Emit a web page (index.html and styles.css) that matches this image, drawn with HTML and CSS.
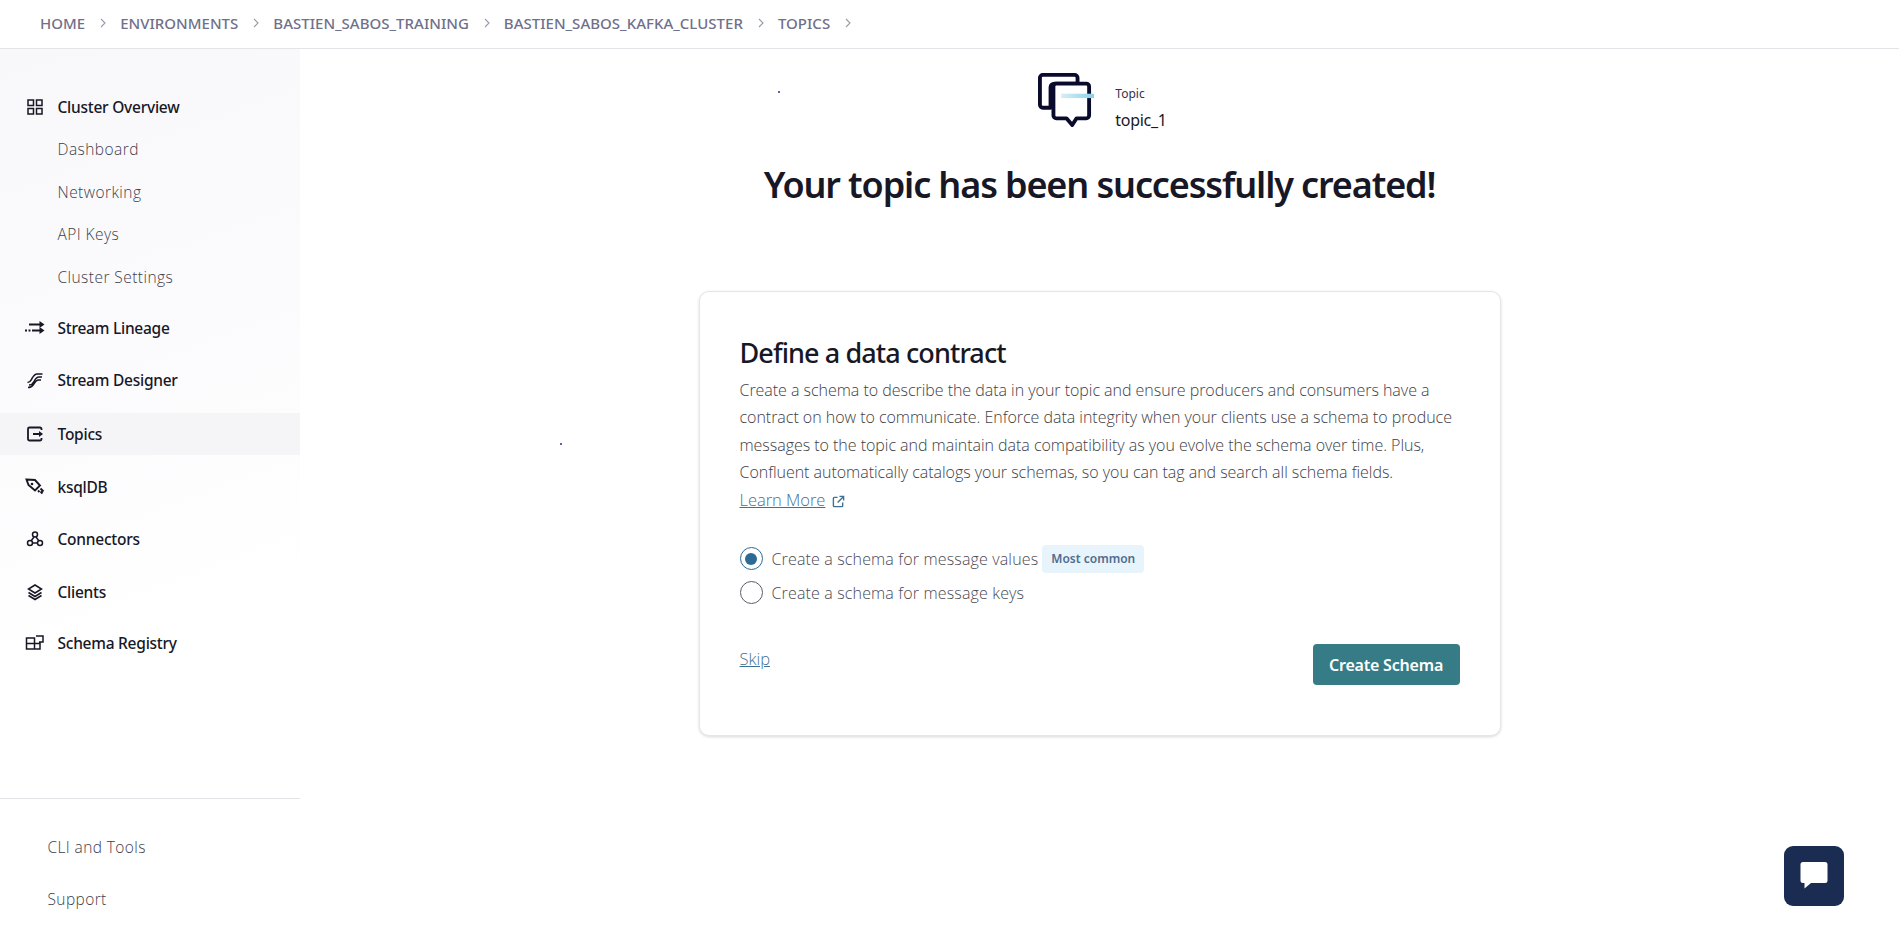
FILE: index.html
```html
<!DOCTYPE html>
<html lang="en">
<head>
<meta charset="utf-8">
<title>Topic created</title>
<link rel="stylesheet" href="styles.css">
</head>
<body>
<header class="topbar">
  <nav class="crumbs">
    <a>HOME</a><svg class="chev" viewBox="0 0 8 12"><path d="M2 2l4 4-4 4"/></svg>
    <a>ENVIRONMENTS</a><svg class="chev" viewBox="0 0 8 12"><path d="M2 2l4 4-4 4"/></svg>
    <a>BASTIEN_SABOS_TRAINING</a><svg class="chev" viewBox="0 0 8 12"><path d="M2 2l4 4-4 4"/></svg>
    <a>BASTIEN_SABOS_KAFKA_CLUSTER</a><svg class="chev" viewBox="0 0 8 12"><path d="M2 2l4 4-4 4"/></svg>
    <a>TOPICS</a><svg class="chev" viewBox="0 0 8 12"><path d="M2 2l4 4-4 4"/></svg>
  </nav>
</header>
<div class="shell">
  <aside class="sidebar">
    <div class="nav">
      <div class="item first"><svg class="ico" viewBox="0 0 18 18"><path d="M2 2h5.500v5.500H2zM10.500 2H16v5.500h-5.500zM2 10.500h5.500V16H2zM10.500 10.500H16V16h-5.500z"/></svg><span>Cluster Overview</span></div>
      <div class="sub">Dashboard</div>
      <div class="sub">Networking</div>
      <div class="sub">API Keys</div>
      <div class="sub">Cluster Settings</div>
      <div class="item"><svg class="ico wide" viewBox="0 0 20 18"><path d="M4 5.500h12M0 11.500h2M3.500 11.500h2M7 11.500h9" stroke-width="2"/><path class="fill" d="M14.500 2l5 3.500-5 3.500zM14.500 8l5 3.500-5 3.500z"/></svg><span>Stream Lineage</span></div>
      <div class="item designer"><svg class="ico" viewBox="0 0 18 18"><path d="M1.500 11.500c3 0 3-1.500 4.500-4S8.500 3 11 3h5.500M3 14c3 0 4-1.500 5-3.500s2.500-4.500 5-4.500h3M2 16.500c3 0 4.500-1.500 5.500-3S10 9 12.500 9H15"/></svg><span>Stream Designer</span></div>
      <div class="item active"><svg class="ico" viewBox="0 0 18 18"><path d="M15.500 5V4a1.500 1.500 0 0 0-1.500-1.500H3.500A1.500 1.500 0 0 0 2 4v10a1.500 1.500 0 0 0 1.500 1.500H14a1.500 1.500 0 0 0 1.500-1.500v-1M7 9h8.500" stroke-width="1.800"/><path class="fill" d="M13 6l4 3-4 3z"/></svg><span>Topics</span></div>
      <div class="item"><svg class="ico wide" viewBox="0 0 20 18"><path d="M1.500 1.500l8.500.5 5 5.500-5 5-6.500-5.500zM13 12.500l1.500 1.500M15.500 10.500l3 3M15.500 13.500l2 2" stroke-width="1.900"/><circle class="fill" cx="7" cy="6" r="1.300"/></svg><span>ksqlDB</span></div>
      <div class="item"><svg class="ico" viewBox="0 0 18 18"><circle cx="9" cy="4.500" r="2.500"/><circle cx="4" cy="13" r="2.500"/><circle cx="14" cy="13" r="2.500"/><path d="M8 7l-2.800 3.800M10 7l2.800 3.800M6.500 13h5"/></svg><span>Connectors</span></div>
      <div class="item"><svg class="ico" viewBox="0 0 18 18"><path d="M9 2l6.500 4L9 10 2.500 6zM2.500 9.500L9 13.500l6.500-4M2.500 12.500L9 16.500l6.500-4"/></svg><span>Clients</span></div>
      <div class="item registry"><svg class="ico wide" viewBox="0 0 20 18"><path d="M1.500 4h8v5.500h-8zM1.500 9.500h8V15h-8zM9.500 9.500H15V15H9.500zM11 2h7v6h-4"/></svg><span>Schema Registry</span></div>
    </div>
    <div class="foot">
      <div class="foot-link">CLI and Tools</div>
      <div class="foot-link">Support</div>
    </div>
  </aside>
  <main class="main">
    <div class="topic-head">
      <svg class="topic-ico" viewBox="0 0 60 56"><defs><linearGradient id="barfade"><stop offset="0" stop-color="#d6eef6"/><stop offset="1" stop-color="#86d2e8"/></linearGradient></defs><path class="back" d="M4 5a3 3 0 0 1 3-3h33a3 3 0 0 1 3 3v6H19a4 4 0 0 0-4 4v21H7a3 3 0 0 1-3-3z"/><path class="front" d="M18 14a3 3 0 0 1 3-3h31a3 3 0 0 1 3 3v30a3 3 0 0 1-3 3H42l-4.500 7-6-7H21a3 3 0 0 1-3-3z"/><rect class="bar" x="26" y="21.500" width="35" height="4.500"/></svg>
      <div class="topic-meta">
        <div class="topic-label">Topic</div>
        <div class="topic-name">topic_1</div>
      </div>
    </div>
    <h1 class="title">Your topic has been successfully created!</h1>
    <section class="card">
      <h2 class="card-title">Define a data contract</h2>
      <p class="copy">Create a schema to describe the data in your topic and ensure producers and consumers have a contract on how to communicate. Enforce data integrity when your clients use a schema to produce messages to the topic and maintain data compatibility as you evolve the schema over time. Plus, Confluent automatically catalogs your schemas, so you can tag and search all schema fields.<br><a class="link">Learn More</a> <svg class="ext" viewBox="0 0 14 14"><path d="M6 2.500H2.500a1 1 0 0 0-1 1v8a1 1 0 0 0 1 1h8a1 1 0 0 0 1-1V8M8 1.500h4.500V6M12.500 1.500L6 8"/></svg></p>
      <div class="radios">
        <div class="radio-row"><span class="radio on"></span><span class="radio-text">Create a schema for message values</span><span class="badge">Most common</span></div>
        <div class="radio-row"><span class="radio"></span><span class="radio-text">Create a schema for message keys</span></div>
      </div>
      <div class="actions">
        <a class="link skip">Skip</a>
        <button class="primary">Create Schema</button>
      </div>
    </section>
  </main>
</div>
<span class="speck speck-a"></span>
<span class="speck speck-b"></span>
<div class="chat"><svg viewBox="0 0 28 30"><path d="M3 1h22a2.500 2.500 0 0 1 2.500 2.500v16a2.500 2.500 0 0 1-2.500 2.500H11l-6.500 5.500V22H3a2.500 2.500 0 0 1-2.500-2.500v-16A2.500 2.500 0 0 1 3 1z"/></svg></div>
</body>
</html>
```
FILE: styles.css
```css
* { box-sizing: border-box; }
html, body { margin: 0; height: 100%; overflow: hidden; }
body { font-family: "Noto Sans", "Open Sans", sans-serif; background: #fff; color: #171726; display: flex; flex-direction: column; }
.topbar { height: 49px; flex: none; border-bottom: 1px solid #e3e3e8; display: flex; align-items: center; padding: 0 0 2px 40px; }
.crumbs { display: flex; align-items: center; font-size: 15px; color: #70708a; font-weight: 500; letter-spacing: 0.02px; }
.chev { width: 8px; height: 12px; margin: 0 13px 0 14px; fill: none; stroke: #9a9aa8; stroke-width: 1.1; }
.shell { flex: 1; display: flex; min-height: 0; }
.sidebar { width: 300px; flex: none; display: flex; flex-direction: column; background: linear-gradient(160deg, #f8f8fb 0%, #fbfbfd 35%, #fff 65%); }
.nav { flex: 1; padding-top: 37px; }
.item { height: 42px; display: flex; align-items: center; padding-left: 26px; margin-top: 10.500px; font-size: 15.500px; font-weight: 500; color: #171726; letter-spacing: -0.25px; }
.item.first { margin-top: 0; }
.item.designer { margin-top: 9.500px; }
.item.registry { margin-top: 9.500px; }
.item span { margin-left: 13.500px; }
.item.active { background: #f5f5f8; margin-top: 12.500px; }
.ico { width: 18px; height: 18px; flex: none; fill: none; stroke: #171726; stroke-width: 1.500; }
.ico.wide { width: 20px; margin-left: -1px; margin-right: -1px; }
.ico .fill { fill: #171726; stroke: none; }
.sub { height: 42.500px; display: flex; align-items: center; padding-left: 57.500px; font-family: "Open Sans", sans-serif; font-size: 15.500px; font-weight: 300; color: #3e3e4a; letter-spacing: 0.45px; }
.sub + .item { margin-top: 9px; }
.foot { height: 141px; border-top: 1px solid #e3e3e8; padding-top: 22px; flex: none; }
.foot-link { height: 52px; display: flex; align-items: center; padding-left: 47.500px; font-family: "Open Sans", sans-serif; font-size: 15.500px; font-weight: 300; color: #3e3e4a; letter-spacing: 0.4px; }
.main { flex: 1; display: flex; flex-direction: column; align-items: center; }
.topic-head { display: flex; align-items: flex-start; margin: 24px 0 0 4px; height: 61px; }
.topic-ico { width: 58px; height: 54px; margin-right: 21px; fill: none; }
.topic-ico .back, .topic-ico .front { stroke: #0a0a2c; stroke-width: 4; stroke-linejoin: round; }
.topic-ico .front { fill: #fff; }
.topic-ico .bar { fill: url(#barfade); }
.topic-meta { padding-top: 12px; }
.topic-label { font-size: 12px; color: #33334d; line-height: 18px; }
.topic-name { font-size: 16px; color: #171726; line-height: 28px; margin-top: 3px; letter-spacing: -0.3px; }
.title { margin: 26px 0 0; font-size: 36px; line-height: 50px; font-weight: 600; color: #171726; letter-spacing: -1.12px; }
.card { margin-top: 81px; width: 802px; height: 445px; background: #fff; border: 1px solid #e6e6ea; border-radius: 10px; box-shadow: 0 1px 3px rgba(0,0,0,.15); padding: 43px 40px 0; display: flex; flex-direction: column; }
.card-title { margin: 0; font-size: 27px; line-height: 36px; font-weight: 500; color: #171726; letter-spacing: -0.9px; }
.copy { margin: 6px 0 0; font-family: "Open Sans", sans-serif; font-size: 16px; line-height: 27.300px; font-weight: 300; color: #3e3e46; letter-spacing: -0.03px; }
.link { color: #3f7195; text-decoration: underline; font-family: "Open Sans", sans-serif; font-size: 16.500px; font-weight: 300; }
.ext { width: 13px; height: 13px; margin-left: 3px; fill: none; stroke: #3f7195; stroke-width: 1.500; vertical-align: -2px; }
.radios { margin-top: 31px; display: flex; flex-direction: column; gap: 7px; }
.radio-row { display: flex; align-items: center; height: 27px; }
.radio { width: 23px; height: 23px; border: 1.500px solid #5c5c6c; border-radius: 50%; flex: none; margin-right: 9px; position: relative; }
.radio.on { border-color: #2e6a96; }
.radio.on::after { content: ""; position: absolute; inset: 4.500px; background: #2e6a96; border-radius: 50%; }
.radio-text { font-family: "Open Sans", sans-serif; font-size: 16px; font-weight: 300; color: #4a4a56; letter-spacing: 0.15px; }
.badge { margin-left: 4px; height: 28px; padding: 0 9px; background: #e8f4fb; border-radius: 4px; font-size: 12px; font-weight: 600; color: #4f6d8f; display: flex; align-items: center; }
.actions { margin-top: 38px; display: flex; justify-content: space-between; align-items: flex-start; }
.skip { margin-top: 3px; }
.primary { border: 0; width: 147px; height: 41px; background: #367c86; color: #fff; border-radius: 4px; font: 600 16px "Noto Sans", sans-serif; letter-spacing: -0.2px; margin-top: 0; }
.speck { position: absolute; width: 2px; height: 2px; background: #2a2a9a; border-radius: 50%; }
.speck-a { left: 778px; top: 91px; }
.speck-b { left: 560px; top: 443px; }
.chat { position: absolute; left: 1784px; top: 846px; width: 60px; height: 60px; background: #1b2c52; border-radius: 9px; display: flex; align-items: center; justify-content: center; }
.chat svg { width: 28px; height: 30px; fill: #fff; }
```
